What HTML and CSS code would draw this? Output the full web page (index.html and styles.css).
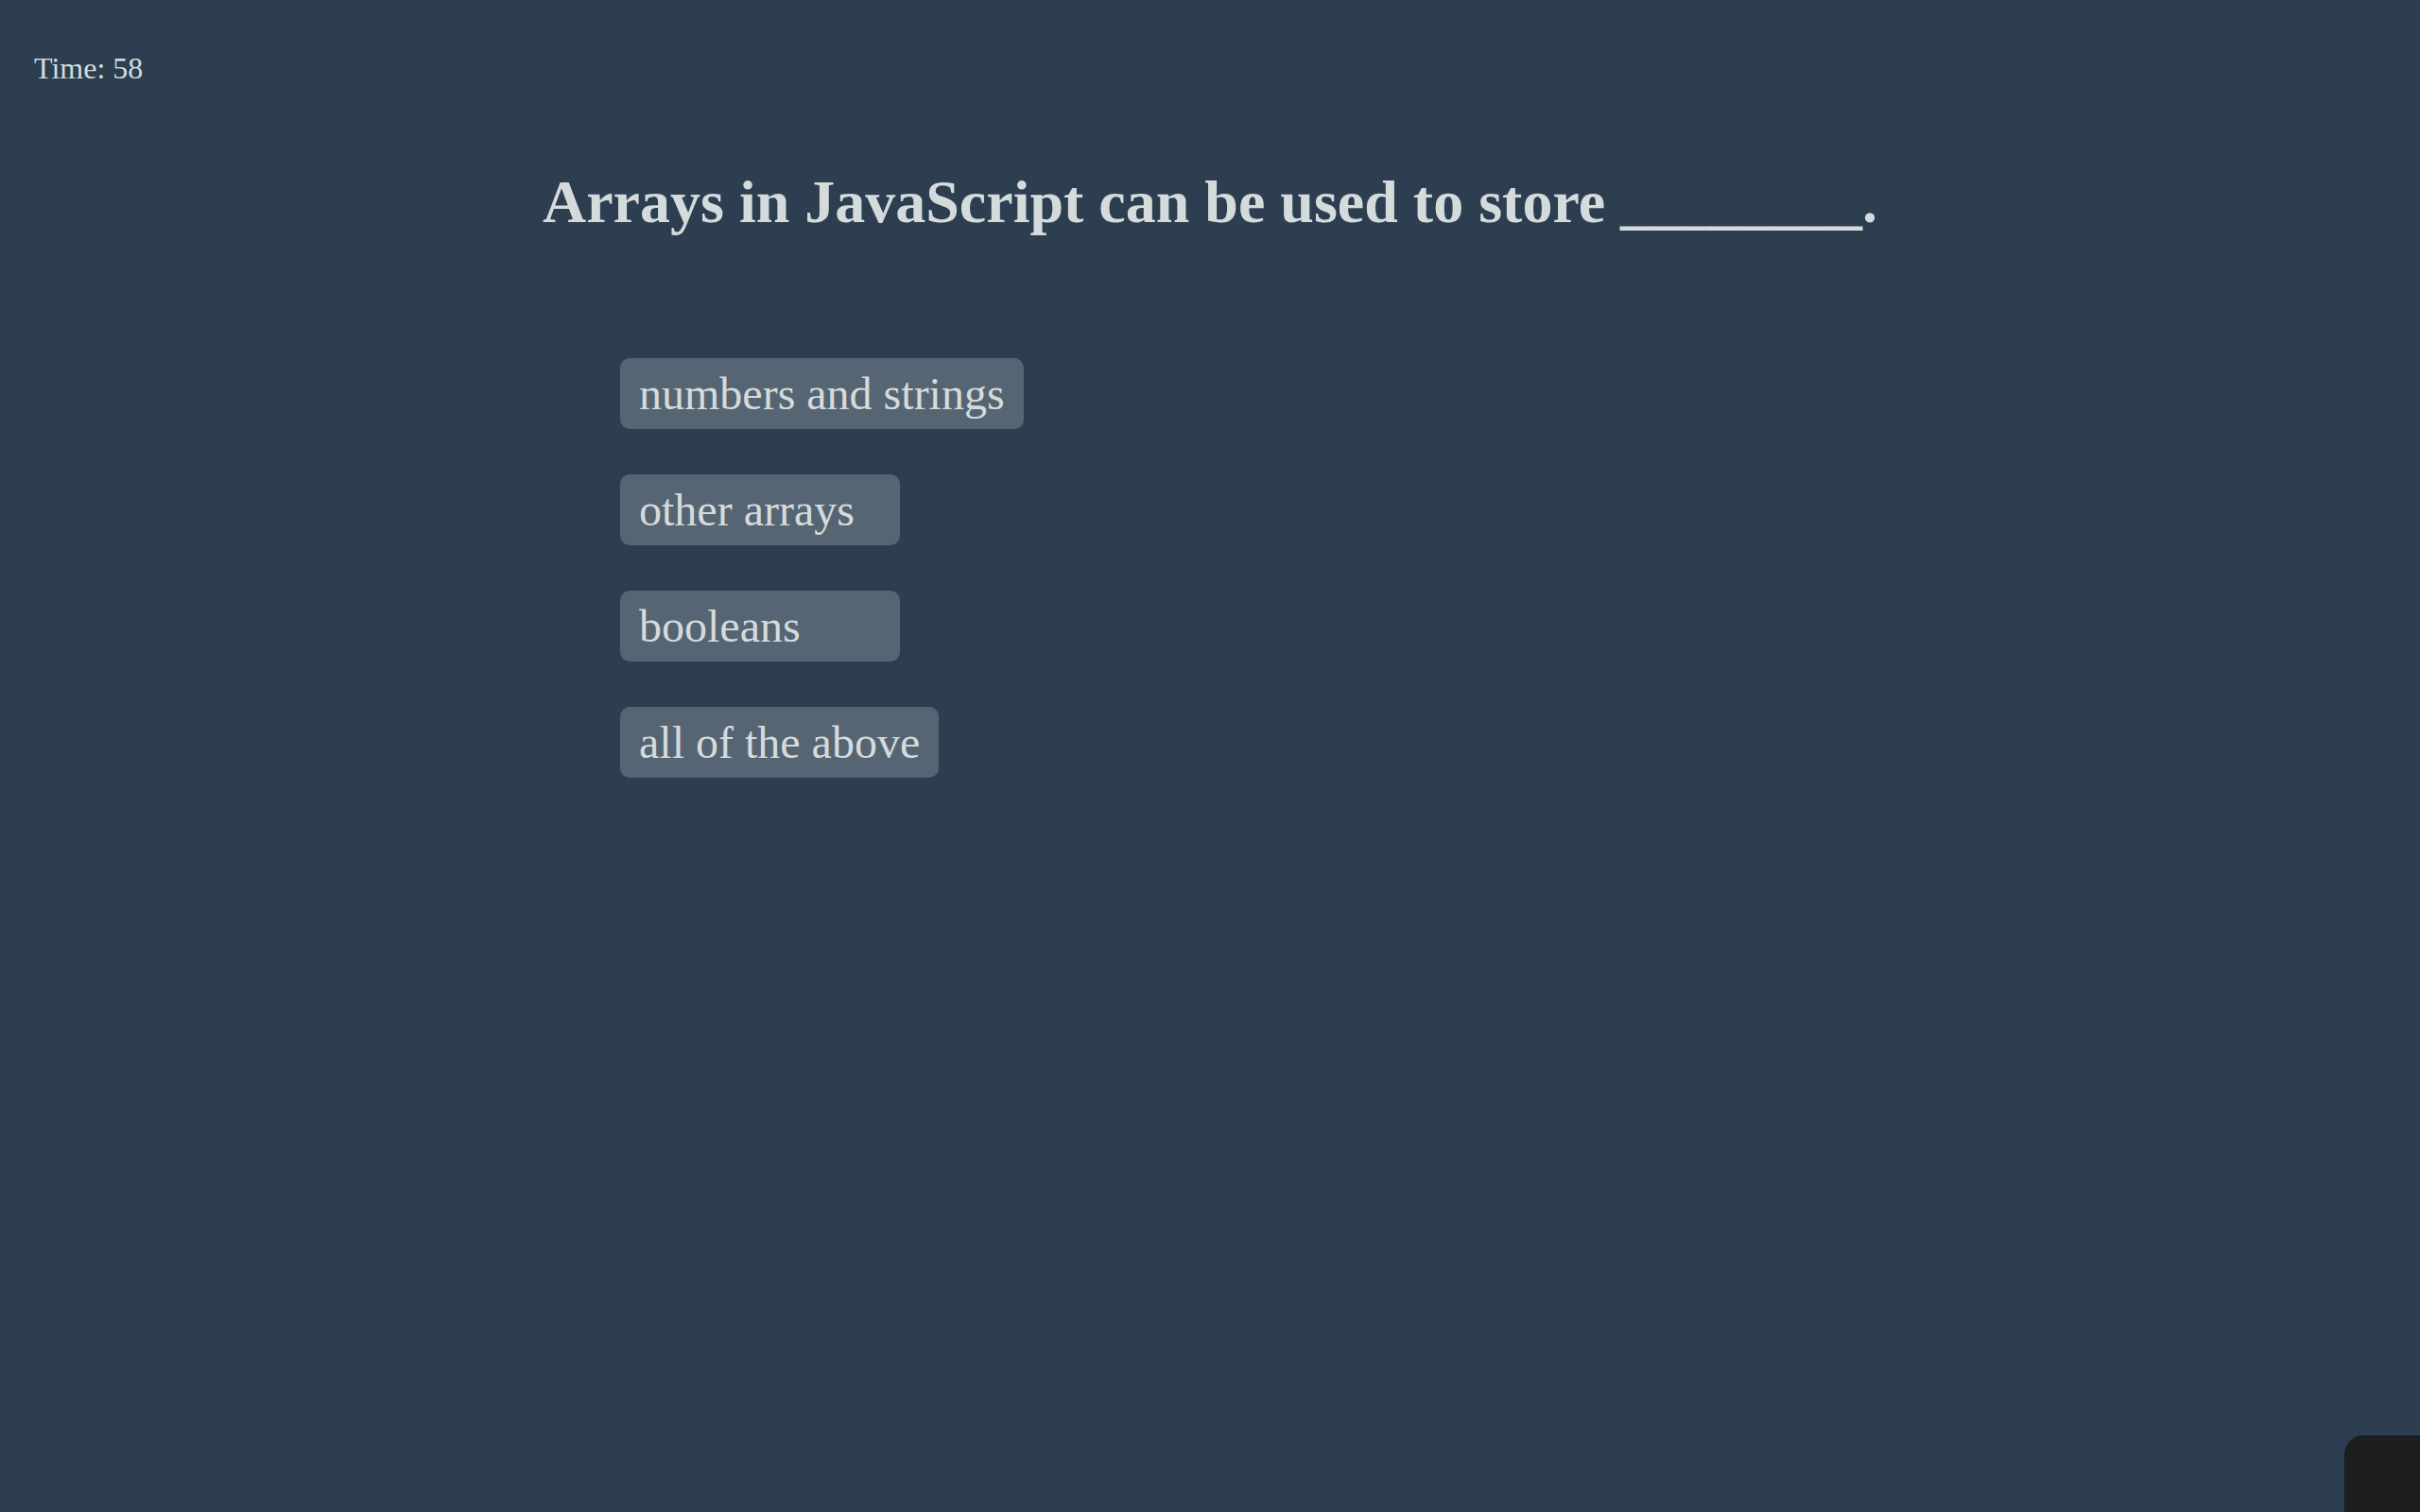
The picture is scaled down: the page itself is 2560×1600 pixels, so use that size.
FILE: index.html
```html
<!DOCTYPE html>
<html lang="en">
<head>
<meta charset="utf-8">
<title>Quiz</title>
<link rel="stylesheet" href="styles.css">
</head>
<body>
<div class="timer">Time: 58</div>
<h1 class="question">Arrays in JavaScript can be used to store ________.</h1>
<div class="choices">
  <button class="choice">numbers and strings</button>
  <button class="choice">other arrays</button>
  <button class="choice">booleans</button>
  <button class="choice">all of the above</button>
</div>
<div class="corner-widget"></div>
</body>
</html>
```
FILE: styles.css
```css
html, body {
  margin: 0;
  padding: 0;
}
body {
  background: #2c3e50;
  color: #d5dbdb;
  font-family: "Liberation Serif", "Times New Roman", serif;
  min-height: 1600px;
  overflow: hidden;
}
.timer {
  font-size: 32px;
  padding: 54px 0 0 36px;
}
.question {
  font-size: 64px;
  font-weight: bold;
  text-align: center;
  margin: 86px 0 0;
}
.choices {
  display: flex;
  flex-direction: column;
  align-items: flex-start;
  gap: 48px;
  padding-left: 656px;
  margin-top: 128px;
}
.choice {
  font-family: inherit;
  font-size: 48px;
  color: #d5dbdb;
  background: #566573;
  border: none;
  border-radius: 10px;
  padding: 10px 20px;
  min-width: 296px;
  text-align: left;
  line-height: normal;
  cursor: pointer;
}
.corner-widget {
  position: fixed;
  left: 2480px;
  top: 1519px;
  width: 120px;
  height: 120px;
  background: #1e1e1e;
  border: 1px solid #0e1a27;
  border-radius: 20px;
}
```
